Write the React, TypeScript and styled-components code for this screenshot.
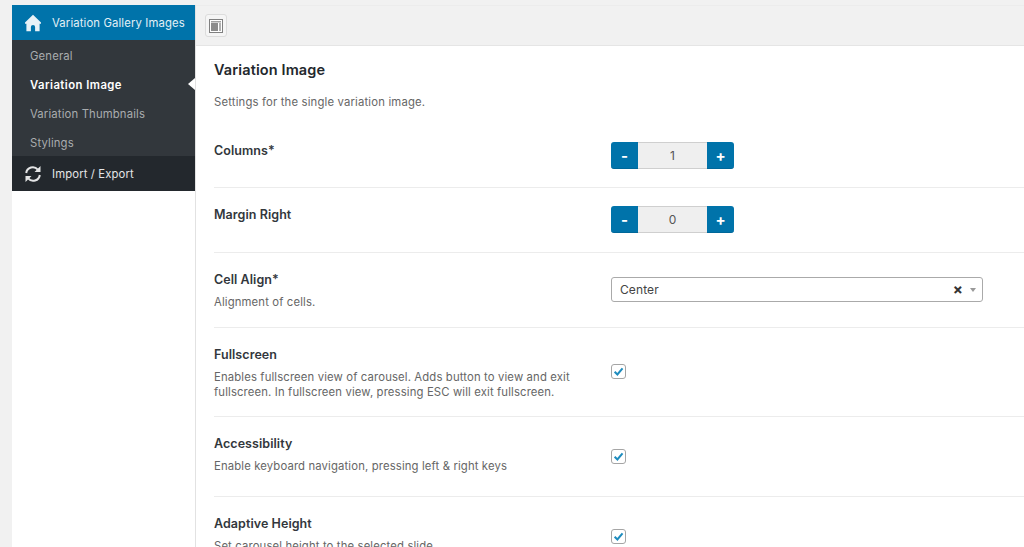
import React from "react";
import styled, { createGlobalStyle } from "styled-components";

const Global = createGlobalStyle`
  html, body { margin: 0; padding: 0; background: #f1f1f1; overflow: hidden; }
  body { font-family: Inter, "Liberation Sans", sans-serif; -webkit-font-smoothing: antialiased; }
  #root { height: 547px; overflow: hidden; }
`;

const Page = styled.div`
  display: flex;
  height: 547px;
  padding: 5px 0 0 12px;
  box-sizing: border-box;
  align-items: stretch;
`;
const Sidebar = styled.aside`
  width: 183px;
  flex: none;
  background: #fff;
  border-right: 1px solid #e2e2e2;
  box-sizing: content-box;
`;
const MenuHead = styled.div<{ $active?: boolean }>`
  height: 35px;
  display: flex;
  align-items: center;
  gap: 10px;
  padding-left: 12px;
  background: ${(p) => (p.$active ? "#0073aa" : "#23282d")};
  color: ${(p) => (p.$active ? "#e3f0f6" : "#e4e5e6")};
  font-size: 11.3px;
  letter-spacing: 0.13px;
  white-space: nowrap;
  svg { width: 18px; height: 18px; flex: none; }
`;
const SubMenu = styled.div`
  background: #32373c;
`;
const SubItem = styled.div<{ $current?: boolean }>`
  position: relative;
  height: 29px;
  line-height: 32px;
  padding-left: 18px;
  font-size: 11.3px;
  letter-spacing: ${(p) => (p.$current ? "0.45px" : "0.15px")};
  color: ${(p) => (p.$current ? "#fff" : "#a9acae")};
  font-weight: ${(p) => (p.$current ? 600 : 400)};
  ${(p) =>
    p.$current &&
    `&::after {
      content: "";
      position: absolute;
      right: 0;
      top: 9px;
      border: 6px solid transparent;
      border-left-width: 0;
      border-right-color: #fff;
      border-right-width: 7px;
    }`}
`;
const Main = styled.main`
  flex: 1;
  min-width: 0;
  background: #fff;
  display: flex;
  flex-direction: column;
`;
const Toolbar = styled.div`
  height: 41px;
  flex: none;
  background: #f1f1f1;
  border-bottom: 1px solid #e5e5e5;
  border-top: 1px solid #ececec;
  box-sizing: border-box;
  display: flex;
  align-items: center;
  padding-left: 9px;
`;
const ToggleButton = styled.button`
  width: 22px;
  height: 23px;
  padding: 0;
  background: #f5f5f5;
  border: 1px solid #dcdcdc;
  border-radius: 3px;
  display: flex;
  align-items: center;
  justify-content: center;
  svg { width: 14px; height: 14px; }
`;
const Content = styled.div`
  padding: 0 0 0 18px;
`;
const Heading = styled.div`
  height: 79px;
  box-sizing: border-box;
  padding-top: 15px;
`;
const Title = styled.h2`
  margin: 0;
  font-size: 14.5px;
  line-height: 17px;
  font-weight: 600;
  letter-spacing: 0.12px;
  color: #23282d;
`;
const Subtitle = styled.p`
  margin: 17px 0 0;
  font-size: 11.3px;
  line-height: 14px;
  letter-spacing: 0.17px;
  color: #666;
`;
const Row = styled.div<{ $h: number; $last?: boolean }>`
  height: ${(p) => p.$h}px;
  box-sizing: border-box;
  display: grid;
  grid-template-columns: 397px 1fr;
  border-bottom: ${(p) => (p.$last ? "none" : "1px solid #ececec")};
`;
const LabelCell = styled.div<{ $top?: number }>`
  padding-top: ${(p) => p.$top ?? 19}px;
`;
const Label = styled.div`
  font-size: 12.5px;
  line-height: 15px;
  font-weight: 600;
  letter-spacing: 0.06px;
  color: #32373c;
`;
const Desc = styled.div`
  margin-top: 8px;
  width: 372px;
  font-size: 11.3px;
  line-height: 15px;
  letter-spacing: 0.14px;
  color: #666;
`;
const Control = styled.div<{ $top: number }>`
  padding-top: ${(p) => p.$top}px;
`;
const Spinner = styled.div`
  display: flex;
  width: 123px;
  height: 27px;
`;
const SpinButton = styled.div<{ $side: "l" | "r" }>`
  width: 27px;
  background: #0073aa;
  border-bottom: 1px solid #006799;
  box-sizing: border-box;
  color: #fff;
  font-size: 15px;
  font-weight: 700;
  display: flex;
  align-items: center;
  justify-content: center;
  border-radius: ${(p) => (p.$side === "l" ? "3px 0 0 3px" : "0 3px 3px 0")};
`;
const SpinValue = styled.div`
  flex: 1;
  background: #efefef;
  border-top: 1px solid #cfcfcf;
  border-bottom: 1px solid #cfcfcf;
  box-sizing: border-box;
  text-align: center;
  font-size: 12px;
  line-height: 25px;
  color: #555;
`;
const Select = styled.div`
  width: 372px;
  height: 25px;
  box-sizing: border-box;
  border: 1px solid #aaa;
  border-radius: 3px;
  display: flex;
  align-items: center;
  padding: 0 6px 0 8px;
  font-size: 12px;
  line-height: 25px;
  letter-spacing: 0.1px;
  color: #444;
`;
const SelectValue = styled.span`
  flex: 1;
`;
const Clear = styled.span`
  font-size: 15px;
  line-height: 15px;
  font-weight: 700;
  color: #333;
  margin-right: 7px;
`;
const Caret = styled.span`
  width: 0;
  height: 0;
  border: 3.5px solid transparent;
  border-top: 4px solid #999;
  border-bottom-width: 0;
`;
const Check = styled.div`
  width: 15px;
  height: 15px;
  box-sizing: border-box;
  border: 1px solid #a5a5a5;
  border-radius: 3px;
  background: #fff;
  display: flex;
  align-items: center;
  justify-content: center;
  svg { width: 11px; height: 11px; }
`;

const HomeIcon = () => (
  <svg viewBox="0 0 18 18">
    <path fill="#e8f2f7" fillRule="evenodd" d="M9 .8 1 8.6v1.2h1.4v7.4h4.5v-4.1a2.1 2.1 0 0 1 4.2 0v4.1h4.5V9.8H17V8.6z" />
  </svg>
);
const SyncIcon = () => (
  <svg viewBox="0 0 18 18" fill="none" stroke="#e4e5e6" strokeWidth="2">
    <path d="M2.2 8A6.6 6.6 0 0 1 13.8 4.6" />
    <path d="M15.8 10A6.6 6.6 0 0 1 4.2 13.4" />
    <path fill="#e4e5e6" stroke="none" d="M16.5 1v6h-6zM1.5 17v-6h6z" />
  </svg>
);
const LayoutIcon = () => (
  <svg viewBox="0 0 14 14">
    <rect x="0.5" y="0.5" width="13" height="13" fill="#fff" stroke="#808080" />
    <rect x="2" y="2" width="10" height="1.5" fill="#a0a0a0" />
    <rect x="2" y="4" width="7" height="8" fill="#8c8c8c" />
    <rect x="10" y="4" width="2" height="8" fill="#b0b0b0" />
  </svg>
);
const Tick = () => (
  <svg viewBox="0 0 12 12"><path d="M1.8 6.2 4.8 9.2 10.4 2.6" fill="none" stroke="#1e8cbe" strokeWidth="2.2" /></svg>
);

const Stepper = ({ value }: { value: string }) => (
  <Spinner>
    <SpinButton $side="l">-</SpinButton>
    <SpinValue>{value}</SpinValue>
    <SpinButton $side="r">+</SpinButton>
  </Spinner>
);

export default function App() {
  return (
    <Page>
      <Global />
      <Sidebar>
        <MenuHead $active><HomeIcon />Variation Gallery Images</MenuHead>
        <SubMenu>
          <SubItem>General</SubItem>
          <SubItem $current>Variation Image</SubItem>
          <SubItem>Variation Thumbnails</SubItem>
          <SubItem>Stylings</SubItem>
        </SubMenu>
        <MenuHead><SyncIcon />Import / Export</MenuHead>
      </Sidebar>
      <Main>
        <Toolbar>
          <ToggleButton aria-label="Toggle"><LayoutIcon /></ToggleButton>
        </Toolbar>
        <Content>
          <Heading>
            <Title>Variation Image</Title>
            <Subtitle>Settings for the single variation image.</Subtitle>
          </Heading>
          <Row $h={63}>
            <LabelCell $top={18}><Label>Columns*</Label></LabelCell>
            <Control $top={17}><Stepper value="1" /></Control>
          </Row>
          <Row $h={65}>
            <LabelCell><Label>Margin Right</Label></LabelCell>
            <Control $top={18}><Stepper value="0" /></Control>
          </Row>
          <Row $h={75}>
            <LabelCell>
              <Label>Cell Align*</Label>
              <Desc>Alignment of cells.</Desc>
            </LabelCell>
            <Control $top={24}>
              <Select>
                <SelectValue>Center</SelectValue>
                <Clear>×</Clear>
                <Caret />
              </Select>
            </Control>
          </Row>
          <Row $h={89}>
            <LabelCell>
              <Label>Fullscreen</Label>
              <Desc>Enables fullscreen view of carousel. Adds button to view and exit fullscreen. In fullscreen view, pressing ESC will exit fullscreen.</Desc>
            </LabelCell>
            <Control $top={36}><Check><Tick /></Check></Control>
          </Row>
          <Row $h={80}>
            <LabelCell>
              <Label>Accessibility</Label>
              <Desc>Enable keyboard navigation, pressing left &amp; right keys</Desc>
            </LabelCell>
            <Control $top={32}><Check><Tick /></Check></Control>
          </Row>
          <Row $h={80} $last>
            <LabelCell>
              <Label>Adaptive Height</Label>
              <Desc>Set carousel height to the selected slide</Desc>
            </LabelCell>
            <Control $top={32}><Check><Tick /></Check></Control>
          </Row>
        </Content>
      </Main>
    </Page>
  );
}
